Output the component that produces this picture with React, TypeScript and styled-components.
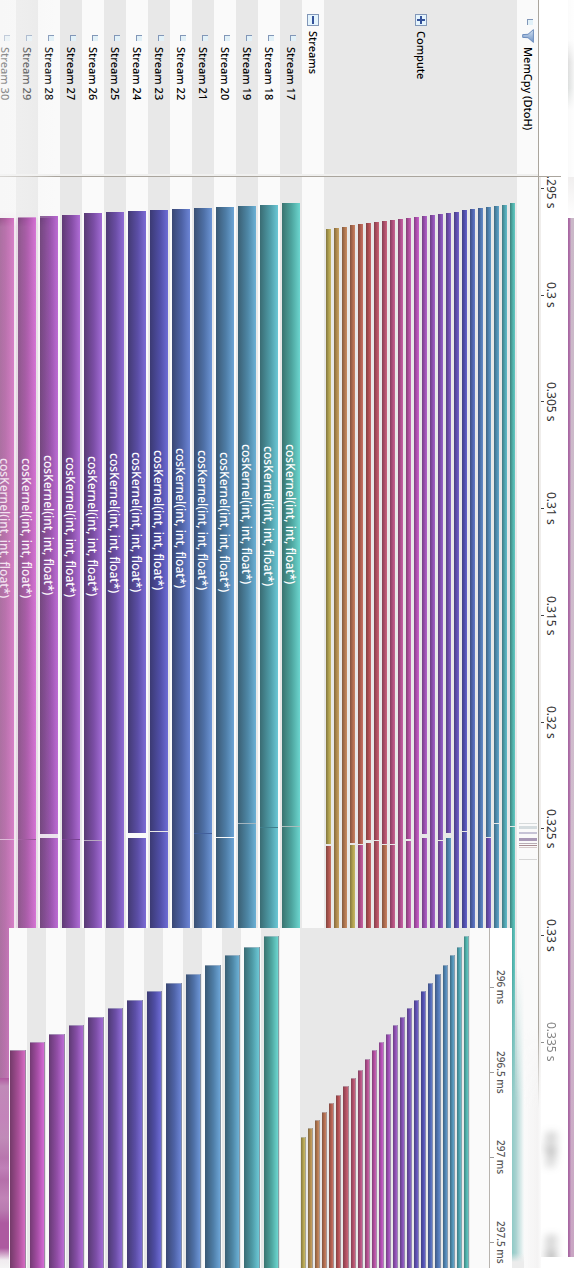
import React from "react";
import styled, { createGlobalStyle } from "styled-components";

const GlobalStyle = createGlobalStyle`
  * { box-sizing: border-box; }
  body { margin: 0; background: #fff; font-family: "Noto Sans", "Open Sans", sans-serif; }
`;

const RULE = "#aaa59d";
const ODD = "#e8e8e8";
const EVEN = "#fafafa";

const fill = (hue: number) =>
  `linear-gradient(90deg, hsl(${hue} 33% 34%), hsl(${hue} 36% 48%) 55%, hsl(${hue} 56% 63%))`;
const thinFill = (hue: number) =>
  `linear-gradient(90deg, hsl(${hue} 34% 38%), hsl(${hue} 40% 51%) 60%, hsl(${hue} 46% 59%))`;

type Kernel = { hue: number; start: number; end?: number; gap?: number; mark?: string; next?: number };
type Stream = Kernel & { id: number };

const streams: Stream[] = [
  { id: 17, hue: 176, start: 26, end: 649, gap: 1, mark: "#a9bcba" },
  { id: 18, hue: 188, start: 28, end: 650, gap: 1, mark: "#3f7f8c" },
  { id: 19, hue: 201, start: 29, end: 646, gap: 1, mark: "#a3b5bf" },
  { id: 20, hue: 208, start: 30, end: 660, gap: 1, mark: "#fafafa" },
  { id: 21, hue: 217, start: 31, end: 656, gap: 1, mark: "#42609c" },
  { id: 22, hue: 226, start: 32, end: 651 },
  { id: 23, hue: 241, start: 33, end: 654, gap: 1, mark: "#e8e8e8" },
  { id: 24, hue: 249, start: 34, end: 656, gap: 5, mark: "#fafafa" },
  { id: 25, hue: 260, start: 35, end: 658 },
  { id: 26, hue: 271, start: 36, end: 663, gap: 1, mark: "#b7a9c0" },
  { id: 27, hue: 278, start: 38, end: 662, gap: 1, mark: "#7a4394" },
  { id: 28, hue: 286, start: 39, end: 657, gap: 4, mark: "#ece6ef" },
  { id: 29, hue: 300, start: 40, end: 662, gap: 1, mark: "#8f4690" },
  { id: 30, hue: 311, start: 41, end: 662, gap: 1, mark: "#dfc0da" },
];

const compute: Kernel[] = [
  { hue: 50, start: 52, end: 667, gap: 2, next: 5 },
  { hue: 37, start: 51 },
  { hue: 24, start: 50 },
  { hue: 18, start: 48, end: 666, gap: 2, next: 50 },
  { hue: 9, start: 47, end: 667, gap: 1, next: 323 },
  { hue: 358, start: 46, end: 663, gap: 3 },
  { hue: 349, start: 45, end: 663, gap: 1 },
  { hue: 343, start: 44, end: 667, gap: 1, next: 18 },
  { hue: 332, start: 43, end: 667, gap: 1 },
  { hue: 321, start: 42 },
  { hue: 311, start: 41, end: 662, gap: 2 },
  { hue: 300, start: 40 },
  { hue: 286, start: 39, end: 657, gap: 4 },
  { hue: 278, start: 38 },
  { hue: 271, start: 37, end: 663, gap: 1 },
  { hue: 260, start: 36, end: 656, gap: 5, next: 208 },
  { hue: 249, start: 35 },
  { hue: 241, start: 33, end: 654, gap: 1 },
  { hue: 226, start: 32 },
  { hue: 217, start: 31 },
  { hue: 208, start: 30, end: 660, gap: 1, next: 256 },
  { hue: 201, start: 29, end: 646, gap: 1 },
  { hue: 188, start: 28 },
  { hue: 176, start: 26, end: 649, gap: 1 },
];

const transfers = [
  { before: 646, size: 1, tone: "#d6dadb" },
  { before: 2, size: 3, tone: "#d5dcdf" },
  { before: 3, size: 2, tone: "#c6c3d6" },
  { before: 4, size: 3, tone: "#a898b6" },
  { before: 2, size: 1, tone: "#b9aeb6" },
  { before: 1, size: 1, tone: "#a98c92" },
  { before: 1, size: 1, tone: "#d5c9c9" },
  { before: 11, size: 1, tone: "#d6d6d6" },
];

const insetTops = [
  8, 19, 27, 37, 46, 55, 63, 72, 80, 89, 97, 106, 114, 122, 131, 142, 150, 158, 167, 175, 184, 192, 200, 209,
];

const Page = styled.main`
  position: relative;
  display: flex;
  min-height: 100vh;
  overflow: hidden;
`;
const StreamGroup = styled.div`
  flex: 1;
  min-width: 0;
  display: flex;
  flex-direction: row-reverse;
  overflow: hidden;
`;
const Track = styled.section<{ $width: number; $tone: string }>`
  flex: none;
  width: ${(p) => p.$width}px;
  display: flex;
  flex-direction: column;
  background: ${(p) => p.$tone};
`;
const Head = styled.header<{ $start: number }>`
  flex: none;
  width: 100%;
  height: 177px;
  padding-top: ${(p) => p.$start}px;
  display: flex;
  flex-direction: column;
  align-items: center;
  border-bottom: 1px solid ${RULE};
  box-shadow: inset 0 -2px #f0f0ef;
`;
const Name = styled.h2<{ $gap: number }>`
  margin: ${(p) => p.$gap}px 0 0;
  writing-mode: vertical-rl;
  font-size: 11px;
  line-height: 16px;
  font-weight: 500;
  white-space: nowrap;
  color: #000;
`;
const Elbow = styled.i`
  flex: none;
  width: 6px;
  height: 6px;
  margin-left: 4px;
  border-top: 1px solid #8297b8;
  border-left: 1px solid #8297b8;
  background: #e2f1f8;
`;
const Toggle = styled.button`
  flex: none;
  width: 12px;
  height: 12px;
  padding: 0;
  border: 1px solid #8297b8;
  background: #e4f4fd;
  display: flex;
  align-items: center;
  justify-content: center;
`;
const Lane = styled.div<{ $start: number }>`
  flex: 1;
  padding: ${(p) => p.$start}px 2px 0;
  display: flex;
  flex-direction: column;
`;
const Segment = styled.div<{ $size?: number; $fill: string }>`
  flex: ${(p) => (p.$size ? "none" : "1")};
  height: ${(p) => (p.$size ? `${p.$size}px` : "auto")};
  background: ${(p) => p.$fill};
  display: flex;
  align-items: center;
  justify-content: center;
`;
const KernelName = styled.span`
  writing-mode: vertical-rl;
  padding-right: 2px;
  font-size: 12px;
  line-height: 16px;
  font-weight: 500;
  white-space: nowrap;
  color: #fff;
`;
const ThinLanes = styled.div`
  flex: 1;
  display: flex;
  gap: 3px;
  padding-left: 2px;
`;
const ThinLane = styled.div<{ $start: number }>`
  width: 5px;
  padding-top: ${(p) => p.$start}px;
  display: flex;
  flex-direction: column;
`;
const Mark = styled.div<{ $before: number; $size: number; $tone: string }>`
  margin: ${(p) => p.$before}px 1px 0 2px;
  height: ${(p) => p.$size}px;
  background: ${(p) => p.$tone};
`;
const Axis = styled.section`
  flex: none;
  width: 36px;
  display: flex;
  flex-direction: column;
  background: #fff;
  border-left: 1px solid ${RULE};
`;
const AxisHead = styled.div`
  height: 177px;
  display: flex;
  align-items: flex-start;
  justify-content: flex-end;
  background: linear-gradient(${RULE}, ${RULE}) 0 100% / 22px 1px no-repeat;
`;
const HeadFringe = styled.div`
  width: 6px;
  height: 177px;
  background: linear-gradient(90deg, transparent, rgba(255, 255, 255, 0.7)),
    linear-gradient(#fbfbfb 40px, #dedede 62px, #dcdfde 88px, #fafafa 110px, #fafafa);
`;
const AxisBody = styled.div`
  flex: 1;
  display: flex;
`;
const Scale = styled.ol`
  flex: 1;
  height: 1080px;
  margin: 0;
  padding: 0;
  list-style: none;
  overflow: hidden;
  border-left: 2px solid #f0eeec;
`;
const ScaleInner = styled.div`
  height: 1174px;
  margin-top: -42px;
  display: flex;
  flex-direction: column;
`;
const Tick = styled.li<{ $haze?: number; $dim?: number }>`
  flex: 1;
  display: flex;
  align-items: center;
  font-size: 12px;
  line-height: 14px;
  color: #333;
  opacity: ${(p) => p.$dim ?? 1};
  filter: ${(p) => (p.$haze ? `blur(${p.$haze}px)` : "none")};
  &::before {
    content: "";
    width: 3px;
    height: 1px;
    background: #444;
  }
`;
const TickName = styled.span`
  writing-mode: vertical-rl;
  white-space: nowrap;
`;
const Fringe = styled.div`
  width: 6px;
  height: 1080px;
  background:
    linear-gradient(#f0eeee, rgba(240, 238, 238, 0) 41px) 0 0 / 6px 41px no-repeat,
    linear-gradient(90deg, #a868a2 1px, #b67fb1 2px, transparent 3px) 0 41px / 6px 1039px no-repeat,
    linear-gradient(#cab8c8, #d0bccd 60%, #c9a5c3) 0 41px / 6px 1039px no-repeat;
`;
const Haze = styled.div`
  position: absolute;
  inset: 177px auto 0 0;
  width: 62px;
  pointer-events: none;
  background: linear-gradient(90deg, rgba(222, 178, 215, 0.42), rgba(222, 178, 215, 0.2) 40%, transparent);
  mask-image: linear-gradient(transparent 34px, #000 50px);
`;
const HeadHaze = styled.div`
  position: absolute;
  inset: 0 auto auto 0;
  width: 56px;
  height: 218px;
  pointer-events: none;
  background: linear-gradient(90deg, rgba(245, 245, 245, 0.6), rgba(245, 245, 245, 0.4) 50%, transparent);
`;
const EdgeBlur = styled.div`
  position: absolute;
  left: 0;
  bottom: 0;
  width: 9px;
  height: 190px;
  background: linear-gradient(
    #b0589f, #c08ab8 8px, #c384ba 40px, #c08bb8 60px, #b876ae 80px, #c080b8 90px,
    #b56faa 102px, #c183b7 120px, #b97bb0 132px, #ad5aa0 145px, #ad5aa0 170px, #f0ebef 182px, #f4f4f4
  );
`;
const TealBlur = styled.div`
  position: absolute;
  right: 50px;
  bottom: 0;
  width: 12px;
  height: 300px;
  background: linear-gradient(transparent 285px, #ececec 294px), linear-gradient(90deg, #8fcac6, #a9d2d0 4px, rgba(240, 250, 250, 0.2));
  mask-image: linear-gradient(transparent, #000 130px);
`;
const RuleFade = styled.div`
  position: absolute;
  right: 33px;
  bottom: 0;
  width: 17px;
  height: 240px;
  pointer-events: none;
  background: linear-gradient(90deg, rgba(250, 250, 250, 0.6), #f4f3f3 80%, #fbfbfb);
  mask-image: linear-gradient(transparent, #000 80px);
`;
const Inset = styled.aside`
  position: absolute;
  left: 9px;
  right: 62px;
  bottom: 0;
  height: 340px;
  display: flex;
  overflow: hidden;
  background: ${EVEN};
`;
const InsetStreams = styled.div`
  flex: 1;
  margin-left: -2px;
  display: flex;
`;
const InsetTrack = styled.div<{ $tone: string; $start: number }>`
  flex: 1;
  display: flex;
  padding: ${(p) => p.$start}px 1px 0 3px;
  background: ${(p) => p.$tone};
`;
const InsetBar = styled.div<{ $fill: string }>`
  flex: 1;
  border: 1px solid rgba(190, 195, 205, 0.55);
  border-width: 1px 1px 0 0;
  background: ${(p) => p.$fill};
`;
const InsetSpacer = styled.div`
  width: 20px;
`;
const InsetCompute = styled.div`
  width: 170px;
  display: flex;
  background: ${ODD};
`;
const InsetThin = styled.div<{ $start: number }>`
  flex: 1;
  display: flex;
  padding: ${(p) => p.$start}px 1px 0;
`;
const InsetAxis = styled.ol`
  width: 23px;
  height: 340px;
  margin: 0 0 0 19px;
  padding: 17px 0 0;
  list-style: none;
  display: flex;
  flex-direction: column;
  background: #fff;
  border-left: 1px solid #b8b4af;
`;
const InsetTick = styled.li`
  flex: none;
  height: 85px;
  display: flex;
  align-items: center;
  font-size: 10px;
  font-weight: 500;
  line-height: 13px;
  color: #555;
  &::before {
    content: "";
    width: 4px;
    height: 1px;
    background: #999;
  }
`;

function Funnel() {
  return (
    <svg width="12" height="14" viewBox="0 0 12 14" aria-hidden="true">
      <defs>
        <linearGradient id="funnel" x1="0" y1="0" x2="0" y2="1">
          <stop offset="0" stopColor="#d6e2f0" />
          <stop offset="1" stopColor="#6f94c7" />
        </linearGradient>
      </defs>
      <path d="M11.4.6v12.8L6 8.7.7 8.4V5.6L6 5.3Z" fill="url(#funnel)" stroke="#6d8dbd" strokeWidth="1" />
    </svg>
  );
}

function Sign({ plus }: { plus?: boolean }) {
  return (
    <svg width="8" height="8" viewBox="0 0 8 8" aria-hidden="true">
      <path d={plus ? "M4 0v8M0 4h8" : "M4 0v8"} stroke="#34529a" strokeWidth="2" />
    </svg>
  );
}

function Runs({ k, paint, children }: { k: Kernel; paint: (h: number) => string; children?: React.ReactNode }) {
  return (
    <>
      {k.end && (
        <Segment $size={k.end - k.start} $fill={paint(k.hue)}>
          {children}
        </Segment>
      )}
      {k.gap && <Segment $size={k.gap} $fill={k.mark ?? "transparent"} />}
      <Segment $fill={paint(k.next ?? k.hue)} />
    </>
  );
}

const times = ["0.295 s", "0.3 s", "0.305 s", "0.31 s", "0.315 s", "0.32 s", "0.325 s", "0.33 s", "0.335 s", "0.34 s", "0.345 s"];

export default function App() {
  return (
    <>
      <GlobalStyle />
      <Page>
        <StreamGroup>
          {streams.map((s, i) => (
            <Track key={s.id} $width={22} $tone={i % 2 ? EVEN : ODD}>
              <Head $start={35}>
                <Elbow />
                <Name $gap={6}>Stream {s.id}</Name>
              </Head>
              <Lane $start={s.start}>
                <Runs k={s} paint={fill}>
                  <KernelName>cosKernel(int, int, float*)</KernelName>
                </Runs>
              </Lane>
            </Track>
          ))}
        </StreamGroup>
        <Track $width={22} $tone={EVEN}>
          <Head $start={14}>
            <Toggle aria-label="Collapse Streams"><Sign /></Toggle>
            <Name $gap={5}>Streams</Name>
          </Head>
        </Track>
        <Track $width={193} $tone={ODD}>
          <Head $start={14}>
            <Toggle aria-label="Expand Compute"><Sign plus /></Toggle>
            <Name $gap={5}>Compute</Name>
          </Head>
          <ThinLanes>
            {compute.map((k, i) => (
              <ThinLane key={i} $start={k.start}>
                <Runs k={k} paint={thinFill} />
              </ThinLane>
            ))}
          </ThinLanes>
        </Track>
        <Track $width={21} $tone={EVEN}>
          <Head $start={19}>
            <Elbow />
            <Name as="span" $gap={4}><Funnel /></Name>
            <Name $gap={4}>MemCpy (DtoH)</Name>
          </Head>
          {transfers.map((t, i) => (
            <Mark key={i} $before={t.before} $size={t.size} $tone={t.tone} />
          ))}
        </Track>
        <Axis>
          <AxisHead>
            <HeadFringe />
          </AxisHead>
          <AxisBody>
            <Scale>
              <ScaleInner>
                {times.map((t, i) => (
                  <Tick key={t} $haze={i > 8 ? 4 : 0} $dim={i === 8 ? 0.6 : 1}>
                    <TickName>{t}</TickName>
                  </Tick>
                ))}
              </ScaleInner>
            </Scale>
            <Fringe />
          </AxisBody>
        </Axis>
        <Haze />
        <HeadHaze />
        <EdgeBlur />
        <RuleFade />
        <TealBlur />
        <Inset>
          <InsetStreams>
            {[...streams].reverse().map((s, i) => (
              <InsetTrack key={s.id} $tone={i % 2 ? ODD : EVEN} $start={insetTops[13 - i]}>
                <InsetBar $fill={fill(s.hue)} />
              </InsetTrack>
            ))}
          </InsetStreams>
          <InsetSpacer />
          <InsetCompute>
            {compute.map((k, i) => (
              <InsetThin key={i} $start={insetTops[23 - i]}>
                <InsetBar $fill={thinFill(k.hue)} />
              </InsetThin>
            ))}
          </InsetCompute>
          <InsetAxis>
            {["296 ms", "296.5 ms", "297 ms", "297.5 ms"].map((t) => (
              <InsetTick key={t}>
                <TickName>{t}</TickName>
              </InsetTick>
            ))}
          </InsetAxis>
        </Inset>
      </Page>
    </>
  );
}
